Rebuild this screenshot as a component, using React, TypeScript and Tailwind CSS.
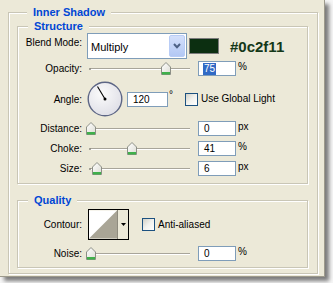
import React from "react";

function Thumb({ left }: { left: number }) {
  return (
    <svg
      className="absolute top-[1px]"
      style={{ left }}
      width="10"
      height="13"
      viewBox="0 0 10 13"
    >
      <defs>
        <linearGradient id="tg" x1="0" y1="0" x2="1" y2="1">
          <stop offset="0" stopColor="#ffffff" />
          <stop offset="1" stopColor="#dcdcd4" />
        </linearGradient>
      </defs>
      <path d="M0.5 12.5 V5 L5 0.5 L9.5 5 V12.5 Z" fill="url(#tg)" stroke="#8c8f86" />
      <rect x="1" y="10" width="8" height="2.5" fill="#3fb04a" />
    </svg>
  );
}

function Slider({ thumb }: { thumb: number }) {
  return (
    <div className="relative ml-[3px] h-[15px] w-[107px] shrink-0">
      <div className="absolute left-[5px] top-[7px] h-[1px] w-[100px] bg-[#a8a59a]" />
      <div className="absolute left-[5px] top-[8px] h-[1px] w-[100px] bg-white" />
      <div className="absolute left-[4px] top-[7px] h-[2px] w-[2px] rounded-full bg-[#8c8a80]" />
      <Thumb left={thumb} />
    </div>
  );
}

function NumBox({ value, unit, w = 38, ml = 6, selected = false }: { value: string; unit?: string; w?: number; ml?: number; selected?: boolean }) {
  return (
    <>
      <div
        className="flex h-[15px] shrink-0 items-center border border-[#7f9db9] bg-white pl-[4px] leading-[11px]"
        style={{ width: w, marginLeft: ml }}
      >
        {selected ? (
          <span className="bg-[#316ac5] px-[1px] leading-[12px] text-white">{value}</span>
        ) : (
          <span className="pl-[1px]">{value}</span>
        )}
      </div>
      {unit && <span className="ml-[2px] self-start leading-[12px]">{unit}</span>}
    </>
  );
}

function Check() {
  return (
    <div className="h-[13px] w-[13px] shrink-0 border border-[#1c5180] bg-gradient-to-br from-[#d2d1c8] via-[#f2f2ee] to-white" />
  );
}

function Label({ text }: { text: string }) {
  return <div className="w-[64px] shrink-0 text-right leading-[15px]">{text}</div>;
}

const legend = "ml-[10px] bg-[#ece9d8] px-[6px] text-[11px] font-bold leading-[12px] text-[#0046d5]";
const etched = "border border-[#c9c6b6] shadow-[1px_1px_0_#fff,inset_1px_1px_0_#fff]";

export default function App() {
  return (
    <div className="h-[283px] w-[333px] bg-[#f7f7f7] font-['Liberation_Sans',Arial,sans-serif] text-[10px] text-black">
      <div className="h-[277px] w-[325px] border-b border-r border-[#9d9a8c] bg-[#ece9d8] pl-[8px] pt-[6px] shadow-[4px_4px_4px_rgba(0,0,0,0.5)]">
        <fieldset className={`h-[268px] w-[310px] px-[8px] pt-[2px] ${etched}`}>
          <legend className={`${legend} -ml-[1px]`}>Inner Shadow</legend>

          <fieldset className={`h-[164px] w-[291px] pt-[1px] ${etched}`}>
            <legend className={legend}>Structure</legend>

            <div className="flex h-[26px] items-start">
              <div className="mt-[4px] w-[64px] text-right leading-[12px]">Blend Mode:</div>
              <div className="ml-[5px] flex h-[26px] w-[100px] items-center border border-[#7f9db9] bg-white pl-[3px] text-[11px]">
                <span className="flex-1 pt-[2px]">Multiply</span>
                <div className="mr-[1px] flex h-[22px] w-[16px] items-center justify-center rounded-[2px] border border-[#b9cdf6] bg-gradient-to-b from-[#d4e0fb] to-[#b3c8f4]">
                  <svg width="8" height="6" viewBox="0 0 8 6">
                    <path d="M1 1 L4 4.2 L7 1" fill="none" stroke="#4d6185" strokeWidth="2" />
                  </svg>
                </div>
              </div>
              <div className="ml-[2px] mt-[5px] h-[16px] w-[30px] border border-[#7c7c7c] bg-[#0c2f11]" />
              <div className="ml-[11px] self-center pt-[1px] text-[15px] font-bold leading-[16px] text-[#143818]">#0c2f11</div>
            </div>

            <div className="mt-[2px] flex h-[15px] items-center">
              <Label text="Opacity:" />
              <Slider thumb={76} />
              <NumBox value="75" unit="%" selected />
            </div>

            <div className="mt-[5px] flex h-[36px] items-center">
              <Label text="Angle:" />
              <svg className="ml-[5px] shrink-0" width="36" height="36" viewBox="0 0 36 36">
                <defs>
                  <radialGradient id="dg" cx="0.4" cy="0.35" r="0.7">
                    <stop offset="0" stopColor="#fbfbfb" />
                    <stop offset="1" stopColor="#dedee6" />
                  </radialGradient>
                </defs>
                <circle cx="18" cy="18" r="16.8" fill="url(#dg)" stroke="#5d6685" strokeWidth="1.4" />
                <line x1="18" y1="18" x2="10.5" y2="5.5" stroke="#000" strokeWidth="1.1" />
                <circle cx="18" cy="18" r="1.5" fill="#000" />
              </svg>
              <NumBox value="120" w={41} ml={4} />
              <span className="ml-[1px] w-[8px] self-start pt-[9px] leading-[10px]">°</span>
              <div className="ml-[8px]">
                <Check />
              </div>
              <span className="ml-[3px] leading-[12px]">Use Global Light</span>
            </div>

            <div className="mt-[4px] flex h-[15px] items-center">
              <Label text="Distance:" />
              <Slider thumb={1} />
              <NumBox value="0" unit="px" />
            </div>

            <div className="mt-[5px] flex h-[15px] items-center">
              <Label text="Choke:" />
              <Slider thumb={42} />
              <NumBox value="41" unit="%" />
            </div>

            <div className="mt-[5px] flex h-[15px] items-center">
              <Label text="Size:" />
              <Slider thumb={7} />
              <NumBox value="6" unit="px" />
            </div>
          </fieldset>

          <fieldset className={`mt-[10px] h-[74px] w-[291px] pt-[3px] ${etched}`}>
            <legend className={legend}>Quality</legend>

            <div className="flex h-[31px] items-center">
              <div className="w-[64px] text-right leading-[12px]">Contour:</div>
              <div className="ml-[6px] flex h-[31px] w-[41px] border border-black bg-[#ece9d8]">
                <svg width="29" height="29" viewBox="0 0 29 29" className="shrink-0 border-r border-[#8e8b7e]">
                  <rect width="29" height="29" fill="#fff" />
                  <path d="M0 29 L29 0 V29 Z" fill="#a9a596" />
                </svg>
                <div className="flex flex-1 items-center justify-center">
                  <svg width="5" height="3" viewBox="0 0 5 3">
                    <path d="M0 0 H5 L2.5 3 Z" fill="#000" />
                  </svg>
                </div>
              </div>
              <div className="ml-[13px]">
                <Check />
              </div>
              <span className="ml-[3px] leading-[12px]">Anti-aliased</span>
            </div>

            <div className="mt-[6px] flex h-[15px] items-center">
              <Label text="Noise:" />
              <Slider thumb={1} />
              <NumBox value="0" unit="%" />
            </div>
          </fieldset>
        </fieldset>
      </div>
    </div>
  );
}
